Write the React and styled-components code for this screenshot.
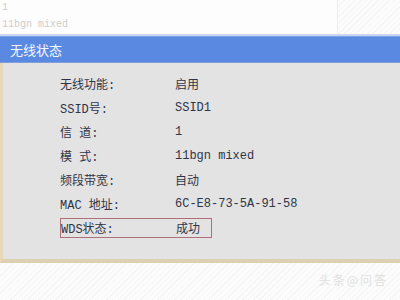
import React from 'react';
import styled, { createGlobalStyle } from 'styled-components';

const Global = createGlobalStyle`
  html, body {
    margin: 0;
    padding: 0;
    width: 400px;
    height: 300px;
    overflow: hidden;
    background: #fbfbfb;
  }
`;

const Page = styled.div`
  width: 400px;
  height: 300px;
  display: flex;
  flex-direction: column;
  background: repeating-linear-gradient(135deg, #fcfcfc 0 3px, #f5f5f5 3px 4px);
  font-family: 'Liberation Mono', 'Noto Sans CJK SC', monospace;
  color: #2f3548;
`;

const Top = styled.div`
  height: 34px;
  background: #fdfdfd;
  display: flex;
  flex-direction: column;
  padding-left: 2px;
  font-size: 10px;
  color: #cdcdcd;
  border-right: 1px solid #ececec;
  width: 338px;
  box-sizing: border-box;
`;

const TopLine = styled.div`
  height: ${(p) => p.h}px;
  line-height: ${(p) => p.h}px;
`;

const Panel = styled.div`
  display: flex;
  flex-direction: column;
  border-top: 2px solid #c8d6ef;
`;

const TitleBar = styled.div`
  height: 25px;
  background: #5a89e2;
  border-top: 1px solid #7b9fe4;
  border-bottom: 1px solid #7f9dd6;
  color: #f4f7ff;
  font: 13px 'Noto Sans CJK SC', sans-serif;
  line-height: 25px;
  padding-left: 10px;
`;

const Body = styled.div`
  height: 187px;
  background: #e3e3e3;
  border-left: 3px solid #e6d8b8;
  border-bottom: 4px solid #ddd0b0;
  padding: 9px 0 0 57px;
  display: flex;
  flex-direction: column;
`;

const Row = styled.div`
  display: flex;
  align-items: center;
  height: 24px;
  font-size: 12px;
`;

const Boxed = styled(Row)`
  height: 20px;
  margin-top: 2px;
  width: 152px;
  border: 1px solid #b0707a;
  box-sizing: border-box;
`;

const Label = styled.span`
  width: 115px;
  white-space: pre;
`;

const Value = styled.span`
  white-space: pre;
`;

const Rest = styled.div`
  flex: 1;
  display: flex;
  justify-content: flex-end;
  align-items: center;
  padding: 0 12px 4px 0;
`;

const Mark = styled.span`
  font: 12px 'Noto Sans CJK SC', sans-serif;
  color: #e0e0e0;
  letter-spacing: 2px;
`;

const rows = [
  ['无线功能:', '启用'],
  ['SSID号:', 'SSID1'],
  ['信 道:', '1'],
  ['模 式:', '11bgn mixed'],
  ['频段带宽:', '自动'],
  ['MAC 地址:', '6C-E8-73-5A-91-58'],
];

export default function App() {
  return (
    <Page>
      <Global />
      <Top>
        <TopLine h={16}>1</TopLine>
        <TopLine h={18}>11bgn mixed</TopLine>
      </Top>
      <Panel>
        <TitleBar>无线状态</TitleBar>
        <Body>
          {rows.map(([l, v]) => (
            <Row key={l}>
              <Label>{l}</Label>
              <Value>{v}</Value>
            </Row>
          ))}
          <Boxed>
            <Label>WDS状态:</Label>
            <Value>成功</Value>
          </Boxed>
        </Body>
      </Panel>
      <Rest>
        <Mark>头条@问答</Mark>
      </Rest>
    </Page>
  );
}
